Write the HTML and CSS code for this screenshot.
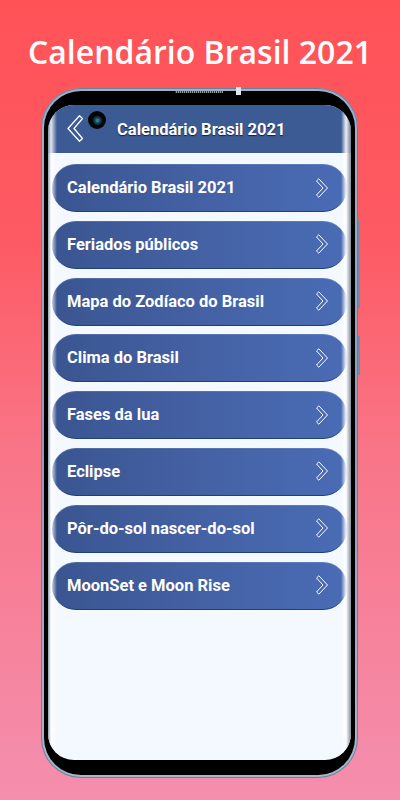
FILE: index.html
```html
<!DOCTYPE html>
<html lang="pt">
<head>
<meta charset="utf-8">
<title>Calendário Brasil 2021</title>
<link rel="stylesheet" href="styles.css">
</head>
<body>
<div class="page">
  <h1 class="title">Calendário Brasil 2021</h1>
  <div class="phone">
    <span class="grille"></span>
    <span class="notch-mark"></span>
    <span class="side-btn btn-1"></span>
    <span class="side-btn btn-2"></span>
    <div class="bezel">
      <div class="screen">
        <header class="appbar">
          <svg class="back" width="17" height="27" viewBox="0 0 17 27"><polygon points="15.5,3.5 12.5,0.8 1,13.5 12.5,26.2 15.5,23.5 7,13.5" fill="none" stroke="#fff" stroke-width="1.3" stroke-linejoin="round"/></svg>
          <span class="camera"><span class="lens"></span></span>
          <span class="appbar-title">Calendário Brasil 2021</span>
        </header>
        <ul class="menu">
          <li class="item"><span>Calendário Brasil 2021</span><svg class="chev" width="14" height="20" viewBox="0 0 14 20"><polygon points="1.5,3 3.8,0.8 12.5,10 3.8,19.2 1.5,17 8,10" fill="none" stroke="#fff" stroke-width="1" stroke-linejoin="round"/></svg></li>
          <li class="item"><span>Feriados públicos</span><svg class="chev" width="14" height="20" viewBox="0 0 14 20"><polygon points="1.5,3 3.8,0.8 12.5,10 3.8,19.2 1.5,17 8,10" fill="none" stroke="#fff" stroke-width="1" stroke-linejoin="round"/></svg></li>
          <li class="item"><span>Mapa do Zodíaco do Brasil</span><svg class="chev" width="14" height="20" viewBox="0 0 14 20"><polygon points="1.5,3 3.8,0.8 12.5,10 3.8,19.2 1.5,17 8,10" fill="none" stroke="#fff" stroke-width="1" stroke-linejoin="round"/></svg></li>
          <li class="item"><span>Clima do Brasil</span><svg class="chev" width="14" height="20" viewBox="0 0 14 20"><polygon points="1.5,3 3.8,0.8 12.5,10 3.8,19.2 1.5,17 8,10" fill="none" stroke="#fff" stroke-width="1" stroke-linejoin="round"/></svg></li>
          <li class="item"><span>Fases da lua</span><svg class="chev" width="14" height="20" viewBox="0 0 14 20"><polygon points="1.5,3 3.8,0.8 12.5,10 3.8,19.2 1.5,17 8,10" fill="none" stroke="#fff" stroke-width="1" stroke-linejoin="round"/></svg></li>
          <li class="item"><span>Eclipse</span><svg class="chev" width="14" height="20" viewBox="0 0 14 20"><polygon points="1.5,3 3.8,0.8 12.5,10 3.8,19.2 1.5,17 8,10" fill="none" stroke="#fff" stroke-width="1" stroke-linejoin="round"/></svg></li>
          <li class="item"><span>Pôr-do-sol nascer-do-sol</span><svg class="chev" width="14" height="20" viewBox="0 0 14 20"><polygon points="1.5,3 3.8,0.8 12.5,10 3.8,19.2 1.5,17 8,10" fill="none" stroke="#fff" stroke-width="1" stroke-linejoin="round"/></svg></li>
          <li class="item"><span>MoonSet e Moon Rise</span><svg class="chev" width="14" height="20" viewBox="0 0 14 20"><polygon points="1.5,3 3.8,0.8 12.5,10 3.8,19.2 1.5,17 8,10" fill="none" stroke="#fff" stroke-width="1" stroke-linejoin="round"/></svg></li>
        </ul>
      </div>
    </div>
  </div>
</div>
</body>
</html>
```

FILE: styles.css
```css
* { box-sizing: border-box; }
html, body { margin: 0; padding: 0; }
body {
  width: 400px;
  height: 800px;
  overflow: hidden;
  background: linear-gradient(180deg, #ff5257 0%, #fd5a63 30%, #f97486 55%, #f48fae 100%);
  font-family: Roboto, "Liberation Sans", sans-serif;
}
.page { display: flex; flex-direction: column; }
.title {
  margin: 0;
  height: 88px;
  padding-top: 14px;
  display: flex;
  align-items: center;
  justify-content: center;
  font-family: "Open Sans", "DejaVu Sans", sans-serif;
  font-weight: 600;
  font-size: 32px;
  letter-spacing: 0;
  color: #fff;
}
.phone {
  position: relative;
  width: 317px;
  height: 690px;
  margin-left: 41px;
  border-radius: 40px;
  padding: 3px;
  background: linear-gradient(180deg, #9fb0c8 0%, #8d9db8 50%, #a9b7cb 100%);
  box-shadow: inset 0 0 0 1px #6e7f9c;
}
.grille {
  position: absolute;
  left: 134px;
  top: 3px;
  width: 48px;
  height: 2px;
  background: repeating-linear-gradient(90deg, #333 0 1px, #999 1px 2px);
}
.notch-mark {
  position: absolute;
  left: 195px;
  top: -1px;
  width: 5px;
  height: 8px;
  background: #dfe6ef;
}
.side-btn {
  position: absolute;
  right: -2px;
  width: 2px;
  background: #6f8db0;
}
.btn-1 { top: 132px; height: 88px; }
.btn-2 { top: 248px; height: 39px; }
.bezel {
  height: 100%;
  border-radius: 37px;
  background: #000;
  padding: 14px 4px 15px 4px;
}
.screen {
  position: relative;
  height: 100%;
  border-radius: 26px;
  overflow: hidden;
  background: #f4f8ff;
}
.screen::after {
  content: "";
  position: absolute;
  inset: 0;
  border-radius: 26px;
  pointer-events: none;
  background: linear-gradient(90deg, rgba(140,150,165,0.9) 0, rgba(255,255,255,0.85) 3px, rgba(255,255,255,0) 9px, rgba(255,255,255,0) calc(100% - 10px), rgba(255,255,255,0.9) calc(100% - 5px), rgba(120,130,145,0.9) 100%);
}
.appbar {
  position: relative;
  height: 48px;
  background: #3c5a93;
  display: flex;
  align-items: center;
  padding-left: 19px;
}
.back { flex: none; margin-top: -1px; }
.camera {
  position: absolute;
  left: 40px;
  top: 6px;
  width: 18px;
  height: 18px;
  border-radius: 50%;
  background: #050608;
  display: flex;
  align-items: center;
  justify-content: center;
}
.lens {
  width: 9px;
  height: 9px;
  border-radius: 50%;
  background: radial-gradient(circle, #2f7b8a 0 20%, #16384a 45%, #0b1a28 100%);
}
.appbar-title {
  margin-left: 33px;
  color: #fff;
  font-weight: 700;
  font-size: 16.5px;
  text-shadow: 0 1px 1px #0e1f45;
}
.menu {
  list-style: none;
  margin: 0;
  padding: 11px 4px 0 4px;
  display: flex;
  flex-direction: column;
  gap: 8.8px;
}
.item {
  height: 48px;
  border-radius: 24px;
  background: linear-gradient(90deg, #3a5590 0%, #4461a4 50%, #4a6cb5 100%);
  border-bottom: 1.5px solid #1f3e7e;
  box-shadow: inset 0 1px 0 rgba(255,255,255,0.12);
  display: flex;
  align-items: center;
  justify-content: space-between;
  padding: 0 18px 0 15px;
  color: #fff;
  font-weight: 700;
  font-size: 16.5px;
}
.chev { flex: none; }
```
